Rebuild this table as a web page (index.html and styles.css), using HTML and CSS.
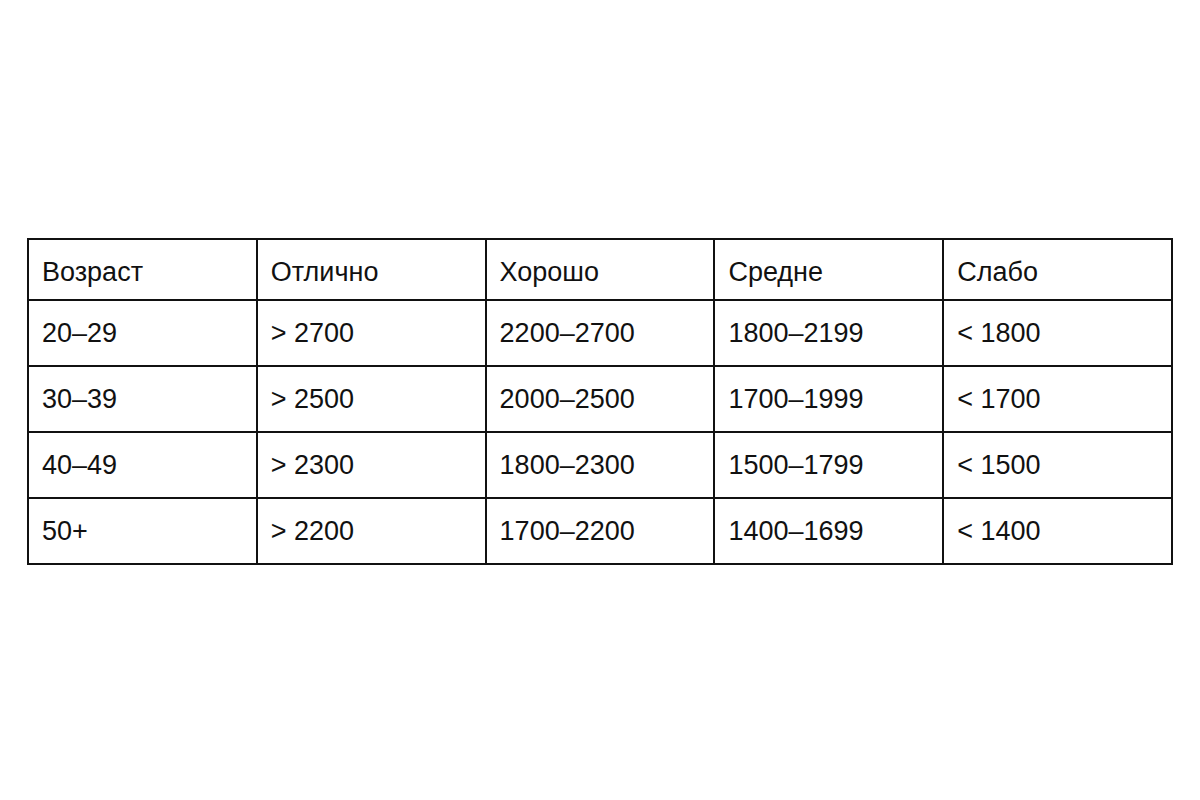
FILE: index.html
```html
<!DOCTYPE html>
<html lang="ru">
<head>
<meta charset="utf-8">
<link rel="stylesheet" href="styles.css">
</head>
<body>
<div class="page">
<table class="grid">
<tr class="head"><td>Возраст</td><td>Отлично</td><td>Хорошо</td><td>Средне</td><td>Слабо</td></tr>
<tr><td>20–29</td><td>&gt; 2700</td><td>2200–2700</td><td>1800–2199</td><td>&lt; 1800</td></tr>
<tr><td>30–39</td><td>&gt; 2500</td><td>2000–2500</td><td>1700–1999</td><td>&lt; 1700</td></tr>
<tr><td>40–49</td><td>&gt; 2300</td><td>1800–2300</td><td>1500–1799</td><td>&lt; 1500</td></tr>
<tr><td>50+</td><td>&gt; 2200</td><td>1700–2200</td><td>1400–1699</td><td>&lt; 1400</td></tr>
</table>
</div>
</body>
</html>
```
FILE: styles.css
```css
html, body {
  margin: 0;
  padding: 0;
  background: #ffffff;
}
.page {
  padding: 238px 27px 0 27px;
  font-family: "Liberation Sans", Arial, sans-serif;
}
.grid {
  width: 1146px;
  border-collapse: collapse;
  table-layout: fixed;
  color: #111111;
  font-size: 27px;
}
.grid td {
  border: 2px solid #111111;
  padding: 0 0 0 13px;
  height: 64px;
  vertical-align: middle;
  line-height: 1;
}
.grid .head td {
  height: 54px;
  padding-top: 5px;
}
```
